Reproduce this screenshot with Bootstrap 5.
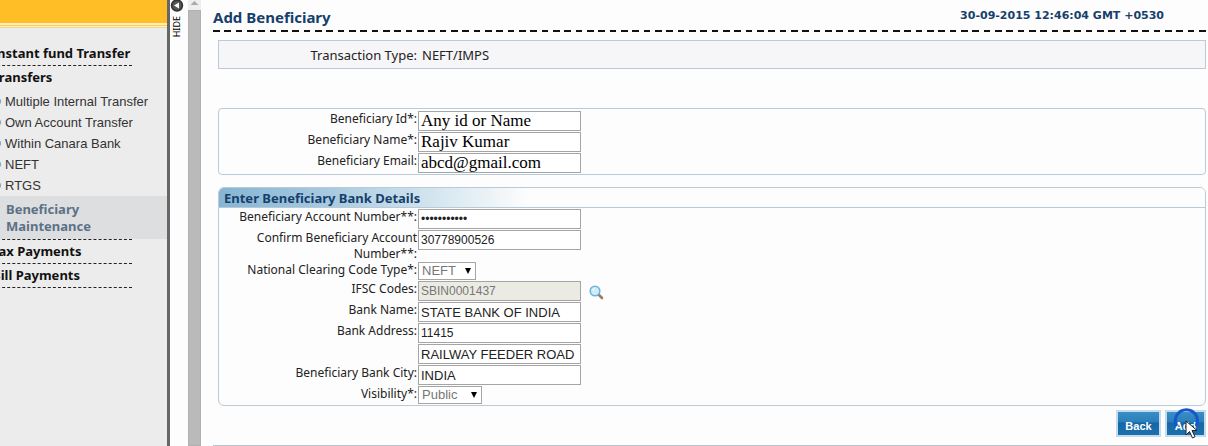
<!DOCTYPE html>
<html lang="en">
<head>
<meta charset="utf-8">
<meta name="viewport" content="width=device-width, initial-scale=1">
<title>Add Beneficiary</title>
<link href="https://cdn.jsdelivr.net/npm/bootstrap@5.3.0/dist/css/bootstrap.min.css" rel="stylesheet">
<style>
body{font:13px/16px "Noto Sans","Open Sans",sans-serif;color:#222;background:#fdfdfd}
.side{width:170px;background:#ececec;border-right:3px solid #666}
.side-band{height:28px;background:linear-gradient(#ffbe26 23px,#fdf0c8 23px 25px,#ffc94d 25px 26px,#fdf3d6 26px 27px,#ffd46a 27px)}
.side-menu{margin:17px 0 0 -8px}
.side a{text-decoration:none}
.side-head{display:block;width:140px;height:24px;padding-top:3px;font-weight:700;color:#111;white-space:nowrap}
.side-first{height:21px;padding-top:0}
.ruled{border-bottom:1px dashed #222}
.side-links{padding-top:1px;font:13px/20px "Liberation Sans",sans-serif}
.side-links a{display:flex;align-items:center;gap:4px;color:#333;height:21px;margin-left:2px;white-space:nowrap}
.side-links a::before{content:"";width:7px;height:7px;border-radius:50%;background:#6aa9d4}
.side-current{display:block;background:#dddee0;height:43px;line-height:17px;padding:5px 60px 0 14px;font-weight:700;color:#5b7186}
.after-current{width:140px}
.hide-strip{width:18px}
.hide-strip button{border:0;background:none}
.hide-word{writing-mode:vertical-rl;transform:rotate(180deg);font-size:9px;line-height:14px;color:#000}
.scroller{width:13px;background:#eee}
.scroller div{background:#bababa;border:1px solid #b0b0b0}
.page{padding-left:12px}
.page-top{height:30px;color:#173f6b}
.page-top h1{font-size:15px;line-height:18px;font-weight:700}
.page-top time{font:700 11px/16px "DejaVu Sans",sans-serif;margin-right:44px}
.dash-rule{height:2px;background:repeating-linear-gradient(90deg,#111 0 7px,transparent 7px 11px,#111 11px 18px,transparent 18px 23px,#111 23px 29px,transparent 29px 34px)}
.panel{border:1px solid #b9cbd8;margin:0 2px 0 5px}
.type-row{background:#f6f6f8;height:29px;margin-bottom:39px}
.who{padding-top:2px;margin-bottom:12px}
.bank-body{padding-top:1px}
.f-row{display:flex;align-items:flex-start;min-height:21px}
.f-short{min-height:19px}
.f-label{width:199px;text-align:right;flex:none;padding-right:1px}
.f-row .f-label{font-size:12px}
.f-box{width:163px;height:20px;border:1px solid #a5a5a5;border-radius:0;background:#fff;padding:0 2px;font:13px/18px "Liberation Sans",sans-serif;color:#222}
.f-box.digits{font-size:12px}
.f-box:disabled{background:#ebebe4;color:#777}
.f-box.serif{font:17px/18px "Liberation Serif",serif;color:#000}
.f-pick{position:relative;height:18px}
.f-pick select{appearance:none;display:block;width:100%;height:18px;border:1px solid #a5a5a5;background:#fff;color:#777;padding:0 3px;font:13px/16px "Liberation Sans",sans-serif;opacity:1}
.f-pick::after{content:"";position:absolute;right:5px;top:6px;border:3px solid transparent;border-top:6px solid #000;border-bottom:0}
.pick-s{width:58px}
.pick-m{width:64px}
.bank-head{height:20px;margin:0;padding-left:5px;font-size:13px;line-height:20px;font-weight:700;color:#173f6b;border-bottom:1px solid #b9cbd8;background:linear-gradient(90deg,#86b5d3,#a7cae0 110px,#fdfdfd 310px)}
.find{border:0;background:none}
.actions{margin-right:2px}
.act{display:block;height:27px;border:2px solid #c3dcec;border-radius:0;background:linear-gradient(#3a8dc6,#2a7fba 45%,#1666a5 46%,#1d70ae);color:#fff;font:700 11px/14px "Liberation Sans",sans-serif;padding:5px 0 0}
.act-back{width:45px}
.act-add{width:41px}
.pointer{left:7px;top:-3px}
.end-rule{height:1px;background:#b9c4cc}
</style>
</head>
<body>
<div class="d-flex min-vh-100 overflow-hidden">
<aside class="side flex-shrink-0 overflow-hidden">
<div class="side-band"></div>
<nav class="side-menu">
<a class="side-head side-first ruled" href="#">Instant fund Transfer</a>
<a class="side-head" href="#">Transfers</a>
<div class="side-links">
<a href="#">Multiple Internal Transfer</a>
<a href="#">Own Account Transfer</a>
<a href="#">Within Canara Bank</a>
<a href="#">NEFT</a>
<a href="#">RTGS</a>
</div>
<a class="side-current" href="#">Beneficiary Maintenance</a>
<div class="after-current ruled"></div>
<a class="side-head ruled" href="#">Tax Payments</a>
<a class="side-head ruled" href="#">Bill Payments</a>
</nav>
</aside>
<div class="hide-strip flex-shrink-0">
<button class="p-0 d-flex flex-column align-items-start gap-1 w-100" type="button">
<svg width="14" height="12" viewBox="0 0 14 12"><circle cx="7" cy="5.500" r="6.200" fill="#333"/><circle cx="7" cy="5.500" r="4.600" fill="#555"/><path d="M9 2.500v6L4 5.500z" fill="#fff"/></svg>
<span class="hide-word">HIDE</span>
</button>
</div>
<div class="scroller flex-shrink-0 d-flex flex-column align-items-center">
<svg width="13" height="10" viewBox="0 0 13 10"><path d="M2.500 5L6.500 1l4 4z" fill="#aaa"/></svg>
<div class="flex-grow-1 w-100"></div>
</div>
<main class="page flex-grow-1">
<header class="page-top d-flex justify-content-between">
<h1 class="mb-0 pt-2">Add Beneficiary</h1>
<time class="pt-2" datetime="2015-09-30T12:46:04+05:30">30-09-2015 12:46:04 GMT +0530</time>
</header>
<div class="dash-rule mb-2"></div>
<form>
<div class="panel type-row d-flex align-items-center"><span class="f-label">Transaction Type:</span><span class="ps-1">NEFT/IMPS</span></div>
<section class="panel who rounded-1">
<div class="f-row"><label class="f-label" for="bid">Beneficiary Id*:</label><input class="f-box serif" id="bid" value="Any id or Name"></div>
<div class="f-row"><label class="f-label" for="bname">Beneficiary Name*:</label><input class="f-box serif" id="bname" value="Rajiv Kumar"></div>
<div class="f-row"><label class="f-label" for="bmail">Beneficiary Email:</label><input class="f-box serif" id="bmail" value="abcd@gmail.com"></div>
</section>
<section class="panel rounded-2 overflow-hidden">
<h2 class="bank-head">Enter Beneficiary Bank Details</h2>
<div class="bank-body">
<div class="f-row"><label class="f-label" for="acc">Beneficiary Account Number**:</label><input class="f-box digits" id="acc" type="password" value="30778900526"></div>
<div class="f-row"><label class="f-label" for="acc2">Confirm Beneficiary Account Number**:</label><input class="f-box digits" id="acc2" value="30778900526"></div>
<div class="f-row f-short"><label class="f-label" for="code">National Clearing Code Type*:</label><div class="f-pick pick-s"><select id="code"><option>NEFT</option></select></div></div>
<div class="f-row"><label class="f-label" for="ifsc">IFSC Codes:</label><input class="f-box digits" id="ifsc" value="SBIN0001437" disabled>
<button class="find p-0 ms-2" type="button" aria-label="Find IFSC code"><svg class="d-block" width="15" height="20" viewBox="0 0 15 20"><path d="M9 13l4 4" stroke="#9b7b66" stroke-width="2.600" stroke-linecap="round"/><circle cx="6" cy="10" r="4.800" fill="#cfeafa" stroke="#6fb2dc" stroke-width="1.600"/><path d="M4 9.500a2.500 2.500 0 0 1 2-2" stroke="#fff" fill="none"/></svg></button></div>
<div class="f-row"><label class="f-label" for="bank">Bank Name:</label><input class="f-box" id="bank" value="STATE BANK OF INDIA"></div>
<div class="f-row"><label class="f-label" for="addr">Bank Address:</label><input class="f-box digits" id="addr" value="11415"></div>
<div class="f-row"><span class="f-label"></span><input class="f-box" aria-label="Bank Address line 2" value="RAILWAY FEEDER ROAD"></div>
<div class="f-row"><label class="f-label" for="city">Beneficiary Bank City:</label><input class="f-box" id="city" value="INDIA"></div>
<div class="f-row f-short"><label class="f-label" for="vis">Visibility*:</label><div class="f-pick pick-m"><select id="vis"><option>Public</option></select></div></div>
</div>
</section>
<div class="actions d-flex justify-content-end gap-1 pt-1">
<button class="act act-back" type="button">Back</button>
<div class="position-relative"><button class="act act-add" type="submit">Add</button>
<svg class="pointer position-absolute" width="30" height="34" viewBox="0 0 30 34" aria-hidden="true"><path d="M4.800 19A11 11 0 1 1 24 19" fill="none" stroke="#1457cc" stroke-width="3"/><path d="M14 14v14l3.500-3.500 3 6.500 2.500-1.200-3-6.300h5z" fill="#fff" stroke="#222"/></svg></div>
</div>
</form>
<div class="end-rule mt-2"></div>
</main>
</div>
</body>
</html>
